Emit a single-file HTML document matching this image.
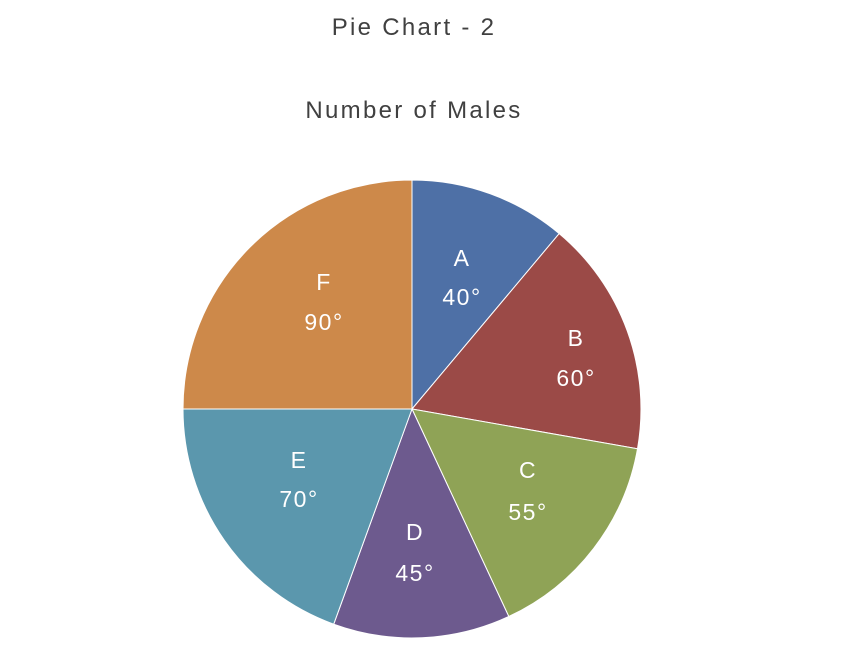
<!DOCTYPE html>
<html><head><style>
html,body{margin:0;padding:0;background:#fff;}
body{width:852px;height:656px;overflow:hidden;position:relative;font-family:"Liberation Sans",sans-serif;}
.t{position:absolute;left:0;width:828px;text-align:center;color:#404040;font-size:24px;letter-spacing:2.3px;}
</style></head><body>
<div class="t" style="top:14px">Pie Chart - 2</div>
<div class="t" style="top:97px">Number of Males</div>
<svg width="852" height="656" style="position:absolute;left:0;top:0">
<g stroke="#fff" stroke-width="1">
<path d="M412,409 L412,180 A229,229 0 0 1 559.2,233.6 Z" fill="#4E70A6"/>
<path d="M412,409 L559.2,233.6 A229,229 0 0 1 637.5,448.8 Z" fill="#9B4A47"/>
<path d="M412,409 L637.5,448.8 A229,229 0 0 1 508.8,616.5 Z" fill="#8FA356"/>
<path d="M412,409 L508.8,616.5 A229,229 0 0 1 333.7,624.2 Z" fill="#6D5A8E"/>
<path d="M412,409 L333.7,624.2 A229,229 0 0 1 183,409 Z" fill="#5B97AD"/>
<path d="M412,409 L183,409 A229,229 0 0 1 412,180 Z" fill="#CD894A"/>
</g>
<g fill="#fff" font-family="Liberation Sans, sans-serif" font-size="23" text-anchor="middle" letter-spacing="1.5">
<text x="462" y="266">A</text><text x="462" y="305">40°</text>
<text x="576" y="346">B</text><text x="576" y="386">60°</text>
<text x="528" y="478">C</text><text x="528" y="520">55°</text>
<text x="415" y="540">D</text><text x="415" y="581">45°</text>
<text x="299" y="468">E</text><text x="299" y="507">70°</text>
<text x="324" y="290">F</text><text x="324" y="330">90°</text>
</g>
</svg>
</body></html>
